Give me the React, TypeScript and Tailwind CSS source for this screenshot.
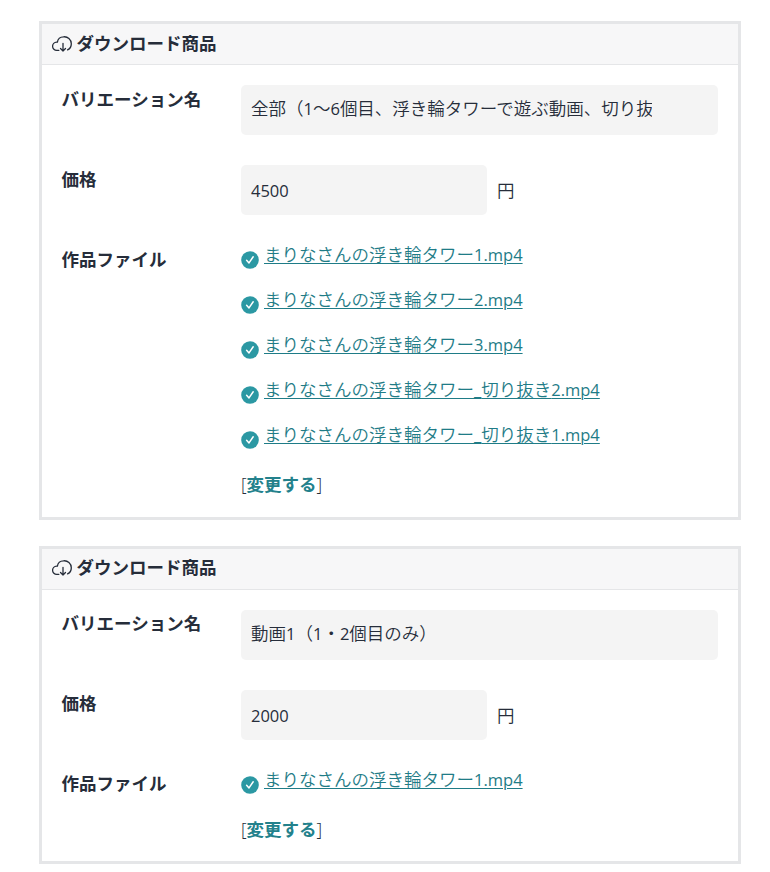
import { Fragment } from "react";

type Variation = {
  name: string;
  price: string;
  files: string[];
};

const variations: Variation[] = [
  {
    name: "全部（1～6個目、浮き輪タワーで遊ぶ動画、切り抜",
    price: "4500",
    files: [
      "まりなさんの浮き輪タワー1.mp4",
      "まりなさんの浮き輪タワー2.mp4",
      "まりなさんの浮き輪タワー3.mp4",
      "まりなさんの浮き輪タワー_切り抜き2.mp4",
      "まりなさんの浮き輪タワー_切り抜き1.mp4",
    ],
  },
  {
    name: "動画1（1・2個目のみ）",
    price: "2000",
    files: ["まりなさんの浮き輪タワー1.mp4"],
  },
];

// Latin runs are set slightly smaller than the Japanese around them
const Mixed = ({ text }: { text: string }) => (
  <>
    {text.split(/([\w.]+)/).map((part, index) =>
      index % 2 ? (
        <span key={index} className="font-['Open_Sans',sans-serif] text-[16.5px] font-[370]">{part}</span>
      ) : (
        <Fragment key={index}>{part}</Fragment>
      )
    )}
  </>
);

const CloudIcon = () => (
  <svg className="mt-[2px] h-4 w-5 shrink-0" viewBox="0 0 20 16" fill="none" stroke="currentColor" strokeWidth="1.3" strokeLinecap="round" strokeLinejoin="round">
    <path d="M6.8 14.4H4.8A4.1 4.1 0 0 1 4.6 6.2H5.4A6 6 0 0 1 11.4 0.8A7 7 0 0 1 19.3 7.8A6.8 6.8 0 0 1 15.6 13.9" />
    <path d="M11 7.3V15M8.5 12.5L11 15L13.5 12.5" />
  </svg>
);

const CheckIcon = () => (
  <svg className="mt-[6px] h-[18px] w-[18px] shrink-0" viewBox="0 0 18 18" fill="none">
    <circle cx="9" cy="9" r="8.8" fill="#2b98a3" />
    <path d="M5.6 9.3L8 11.9L12.2 5.8" stroke="white" strokeWidth="1.5" strokeLinecap="round" strokeLinejoin="round" />
  </svg>
);

const ProductCard = ({ name, price, files }: Variation) => (
  <section className="border-[3px] border-[#e5e6e8]">
    <h2 className="flex h-[41px] items-center gap-[4.5px] border-b border-[#e5e6e8] bg-[#f7f7f8] pb-[3px] pl-[10px] font-bold">
      <CloudIcon />
      ダウンロード商品
    </h2>
    <dl className="grid grid-cols-[179px_minmax(0,1fr)] gap-y-[30px] px-5 pt-5 pb-[19.4px]">
      <dt className="-ml-[0.5px] pt-[0.4px] font-bold">バリエーション名</dt>
      <dd className="h-[50px] rounded-[5px] bg-[#f4f4f4] pr-[66px] pl-[10px] leading-[47.4px]">
        <div className="overflow-hidden whitespace-nowrap">
          <Mixed text={name} />
        </div>
      </dd>

      <dt className="-ml-[0.5px] pt-[0.4px] font-bold">価格</dt>
      <dd className="flex items-center gap-[10px]">
        <div className="h-[50px] w-[246px] rounded-[5px] bg-[#f4f4f4] pl-[10px] leading-[50px]">
          <Mixed text={price} />
        </div>
        円
      </dd>

      <dt className="-ml-[0.5px] pt-[0.4px] font-bold">作品ファイル</dt>
      <dd>
        <ul>
          {files.map((file) => (
            <li key={file} className="mb-[19px] flex h-[26px] gap-[5px]">
              <CheckIcon />
              <a href="#" className="-mt-[4px] text-[#1f7c87] underline decoration-1 underline-offset-2">
                <Mixed text={file} />
              </a>
            </li>
          ))}
        </ul>
        <div className="pt-px">
          [<a href="#" className="font-bold text-[#23818c]">変更する</a>]
        </div>
      </dd>
    </dl>
  </section>
);

const App = () => {
  return (
    <main className="flex h-[872px] flex-col gap-[26.3px] overflow-hidden bg-white pt-[21.3px] pr-[29px] pl-[39px] font-['Open_Sans','Noto_Sans_CJK_JP',sans-serif] text-[17.5px] leading-[26px] font-[350] text-[#262d3a]">
      {variations.map((variation) => (
        <ProductCard key={variation.name} {...variation} />
      ))}
    </main>
  );
};

export default App;
